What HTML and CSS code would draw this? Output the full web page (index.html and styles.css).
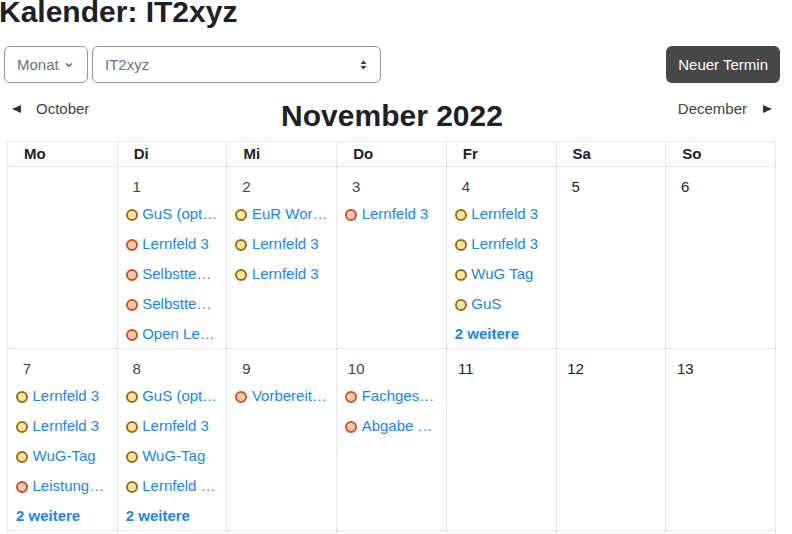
FILE: index.html
```html
<!DOCTYPE html>
<html lang="de">
<head>
<meta charset="utf-8">
<title>Kalender: IT2xyz</title>
<link rel="stylesheet" href="styles.css">
</head>
<body>
<h2 class="page-title">Kalender: IT2xyz</h2>

<div class="toolbar">
  <div class="select select-view">
    <span>Monat</span>
    <svg class="chevron" width="8" height="6" viewBox="0 0 8 6"><path d="M1.2 1.5 L4 4.3 L6.8 1.5" fill="none" stroke="#5b6168" stroke-width="1.5"/></svg>
  </div>
  <div class="select select-course">
    <span>IT2xyz</span>
    <svg class="updown" width="7" height="10" viewBox="0 0 7 10"><path d="M0.5 4 L3.5 0.5 L6.5 4 Z M0.5 6 L3.5 9.5 L6.5 6 Z" fill="#343a40"/></svg>
  </div>
  <div class="btn-new">Neuer Termin</div>
</div>

<div class="month-nav">
  <a class="nav-link nav-prev"><svg width="9" height="8" viewBox="0 0 9 8"><path d="M0 4 L9 0 L9 8 Z" fill="#333"/></svg><span>October</span></a>
  <h2 class="month-title">November 2022</h2>
  <a class="nav-link nav-next"><span>December</span><svg width="9" height="8" viewBox="0 0 9 8"><path d="M9 4 L0 0 L0 8 Z" fill="#333"/></svg></a>
</div>

<div class="calendar">
  <div class="head">Mo</div>
  <div class="head">Di</div>
  <div class="head">Mi</div>
  <div class="head">Do</div>
  <div class="head">Fr</div>
  <div class="head">Sa</div>
  <div class="head">So</div>

  <!-- week 1 -->
  <div class="day"></div>
  <div class="day">
    <div class="num">1</div>
    <div class="event"><span class="dot dot-y"></span><a class="ev-text">GuS (optional)</a></div>
    <div class="event"><span class="dot dot-o"></span><a class="ev-text">Lernfeld 3</a></div>
    <div class="event"><span class="dot dot-o"></span><a class="ev-text">Selbstteam Lernfeld 3</a></div>
    <div class="event"><span class="dot dot-o"></span><a class="ev-text">Selbstteam Lernfeld 4</a></div>
    <div class="event"><span class="dot dot-o"></span><a class="ev-text">Open Learning</a></div>
  </div>
  <div class="day">
    <div class="num">2</div>
    <div class="event"><span class="dot dot-y"></span><a class="ev-text">EuR Workshop</a></div>
    <div class="event"><span class="dot dot-y"></span><a class="ev-text">Lernfeld 3</a></div>
    <div class="event"><span class="dot dot-y"></span><a class="ev-text">Lernfeld 3</a></div>
  </div>
  <div class="day">
    <div class="num">3</div>
    <div class="event"><span class="dot dot-o"></span><a class="ev-text">Lernfeld 3</a></div>
  </div>
  <div class="day">
    <div class="num">4</div>
    <div class="event"><span class="dot dot-y"></span><a class="ev-text">Lernfeld 3</a></div>
    <div class="event"><span class="dot dot-y"></span><a class="ev-text">Lernfeld 3</a></div>
    <div class="event"><span class="dot dot-y"></span><a class="ev-text">WuG Tag</a></div>
    <div class="event"><span class="dot dot-y"></span><a class="ev-text">GuS</a></div>
    <a class="more">2 weitere</a>
  </div>
  <div class="day"><div class="num num-empty">5</div></div>
  <div class="day"><div class="num num-empty">6</div></div>

  <!-- week 2 -->
  <div class="day">
    <div class="num">7</div>
    <div class="event"><span class="dot dot-y"></span><a class="ev-text">Lernfeld 3</a></div>
    <div class="event"><span class="dot dot-y"></span><a class="ev-text">Lernfeld 3</a></div>
    <div class="event"><span class="dot dot-y"></span><a class="ev-text">WuG-Tag</a></div>
    <div class="event"><span class="dot dot-o"></span><a class="ev-text">Leistungsnachweis</a></div>
    <a class="more">2 weitere</a>
  </div>
  <div class="day">
    <div class="num">8</div>
    <div class="event"><span class="dot dot-y"></span><a class="ev-text">GuS (optional)</a></div>
    <div class="event"><span class="dot dot-y"></span><a class="ev-text">Lernfeld 3</a></div>
    <div class="event"><span class="dot dot-y"></span><a class="ev-text">WuG-Tag</a></div>
    <div class="event"><span class="dot dot-y"></span><a class="ev-text">Lernfeld 3 (Klausur)</a></div>
    <a class="more">2 weitere</a>
  </div>
  <div class="day">
    <div class="num">9</div>
    <div class="event"><span class="dot dot-o"></span><a class="ev-text">Vorbereitung</a></div>
  </div>
  <div class="day">
    <div class="num">10</div>
    <div class="event"><span class="dot dot-o"></span><a class="ev-text">Fachgespräch</a></div>
    <div class="event"><span class="dot dot-o"></span><a class="ev-text">Abgabe Projekt</a></div>
  </div>
  <div class="day"><div class="num num-empty">11</div></div>
  <div class="day"><div class="num num-empty">12</div></div>
  <div class="day"><div class="num num-empty">13</div></div>

  <!-- week 3 -->
  <div class="day"><div class="num num-empty">14</div></div>
  <div class="day"><div class="num num-empty">15</div></div>
  <div class="day"><div class="num num-empty">16</div></div>
  <div class="day"><div class="num num-empty">17</div></div>
  <div class="day"><div class="num num-empty">18</div></div>
  <div class="day"><div class="num num-empty">19</div></div>
  <div class="day"><div class="num num-empty">20</div></div>
</div>
</body>
</html>
```

FILE: styles.css
```css
* {
  box-sizing: border-box;
}

html {
  overflow: hidden;
}

body {
  margin: 0;
  font-family: "Liberation Sans", Arial, sans-serif;
  font-size: 15px;
  line-height: 22px;
  color: #1d2125;
  background: #fff;
}

.page-title {
  margin: -6px 0 0 -1px;
  font-size: 30px;
  line-height: 36px;
  font-weight: 700;
  color: #1d2125;
}

/* toolbar */
.toolbar {
  display: flex;
  align-items: center;
  gap: 4px;
  margin: 16px 12px 0 4px;
}

.select {
  height: 37px;
  display: flex;
  align-items: center;
  justify-content: space-between;
  border: 1px solid #8f959e;
  border-radius: 6px;
  color: #6a737b;
  padding: 0 14px 0 12px;
}

.select-view {
  width: 84px;
}

.select-course {
  width: 289px;
  padding-right: 13px;
}

.btn-new {
  margin-left: auto;
  height: 37px;
  display: flex;
  align-items: center;
  padding: 0 12px;
  background: #474747;
  color: #fff;
  border-radius: 6px;
}

/* month navigation */
.month-nav {
  display: grid;
  grid-template-columns: 1fr auto 1fr;
  align-items: start;
  margin: 15px 12px 0 4px;
}

.nav-link {
  display: flex;
  align-items: center;
  height: 22px;
  color: #3f4347;
}

.nav-prev {
  justify-self: start;
  gap: 15px;
  padding-left: 8px;
}

.nav-next {
  justify-self: end;
  gap: 16px;
  padding-right: 8px;
}

.month-title {
  margin: 0;
  font-size: 30px;
  line-height: 36px;
  font-weight: 700;
  color: #1d2125;
}

/* calendar grid */
.calendar {
  display: grid;
  grid-template-columns: repeat(7, 1fr);
  grid-template-rows: 25px repeat(3, 182px);
  width: 769px;
  margin: 7px 0 0 7px;
  border-left: 1px dotted #d2d2d2;
  border-top: 1px dotted #d2d2d2;
}

.head,
.day {
  border-right: 1px dotted #d2d2d2;
  border-bottom: 1px dotted #d2d2d2;
  min-width: 0;
}

.head {
  padding-left: 16px;
  line-height: 24px;
  font-weight: 700;
}

.day {
  padding-top: 4px;
}

.num {
  width: 30px;
  height: 28px;
  margin-left: 4px;
  line-height: 31px;
  text-align: center;
  color: #454545;
}

.num-empty {
  color: #1d2125;
}

.event {
  display: flex;
  align-items: center;
  height: 30px;
  padding: 0 8.5px 0 8px;
}

.dot {
  flex-shrink: 0;
  width: 12px;
  height: 12px;
  margin: 2px 4.5px 0 0;
  border-radius: 50%;
  border: 2px solid;
}

.dot-y {
  background: #fde6a2;
  border-color: #9c6e0b;
}

.dot-o {
  background: #fdcab7;
  border-color: #d94e12;
}

.ev-text {
  min-width: 0;
  line-height: 30px;
  white-space: nowrap;
  overflow: hidden;
  text-overflow: ellipsis;
  color: #1a85f0;
}

.more {
  display: block;
  padding-left: 8px;
  line-height: 30px;
  font-weight: 700;
  color: #1a85f0;
}
```
